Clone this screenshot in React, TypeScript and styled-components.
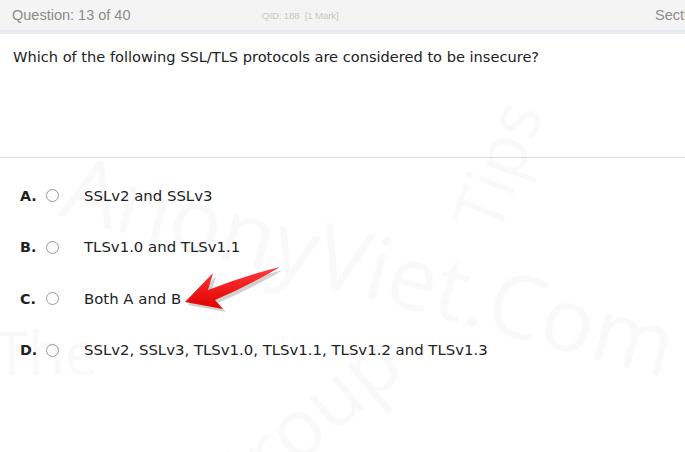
import React from "react";
import styled, { createGlobalStyle } from "styled-components";

const Global = createGlobalStyle`
  html, body { margin: 0; padding: 0; background: #ffffff; overflow: hidden; }
  body { width: 685px; height: 452px; }
`;

const Page = styled.div`
  position: relative;
  width: 685px;
  height: 452px;
  overflow: hidden;
  background: #ffffff;
`;

const Header = styled.header`
  display: flex;
  align-items: center;
  height: 30px;
  background: #f4f4f4;
  border-bottom: 4px solid #e6e9ef;
  font-family: "Liberation Sans", Arial, sans-serif;
  white-space: nowrap;
`;

const HeaderLeft = styled.div`
  flex: 0 0 262px;
  box-sizing: border-box;
  padding-left: 12px;
  font-size: 14.5px;
  color: #8c8c8c;
`;

const HeaderMid = styled.div`
  font-size: 9.8px;
  color: #c8c8c8;
  letter-spacing: -0.2px;
`;

const Spacer = styled.div`
  flex: 1;
`;

const HeaderRight = styled.div`
  flex: 0 0 30px;
  overflow: hidden;
  font-size: 14.5px;
  color: #8c8c8c;
`;

const QuestionBlock = styled.div`
  height: 124px;
  box-sizing: border-box;
  padding: 14px 13px 0;
  border-bottom: 1px solid #dcdcdc;
  font-family: "DejaVu Sans", Verdana, sans-serif;
  font-size: 14.6px;
  color: #222;
`;

const Options = styled.div`
  display: flex;
  flex-direction: column;
  padding-top: 12px;
  font-family: "DejaVu Sans", Verdana, sans-serif;
  font-size: 14.9px;
  color: #222;
`;

const Row = styled.div`
  display: flex;
  align-items: center;
  height: 51.5px;
  padding-left: 20px;
`;

const Label = styled.span`
  width: 26px;
  font-weight: bold;
  font-size: 14.3px;
`;

const Radio = styled.span`
  width: 11px;
  height: 11px;
  border: 1px solid #9a9a9a;
  border-radius: 50%;
  background: #fdfdfd;
  margin-right: 25px;
`;

const Text = styled.span``;

const Watermark = styled.div<{ $x: number; $y: number; $r: number; $s: number }>`
  position: absolute;
  left: ${(p) => p.$x}px;
  top: ${(p) => p.$y}px;
  transform: rotate(${(p) => p.$r}deg);
  transform-origin: left top;
  font-family: "Open Sans", "DejaVu Sans", sans-serif;
  font-size: ${(p) => p.$s}px;
  color: rgba(0, 0, 0, 0.025);
  white-space: nowrap;
  pointer-events: none;
  line-height: 1;
`;

const ArrowSvg = styled.svg`
  position: absolute;
  left: 0;
  top: 0;
  pointer-events: none;
`;

const options = [
  { l: "A.", t: "SSLv2 and SSLv3" },
  { l: "B.", t: "TLSv1.0 and TLSv1.1" },
  { l: "C.", t: "Both A and B" },
  { l: "D.", t: "SSLv2, SSLv3, TLSv1.0, TLSv1.1, TLSv1.2 and TLSv1.3" },
];

export default function App() {
  return (
    <Page>
      <Global />
      <Header>
        <HeaderLeft>Question: 13 of 40</HeaderLeft>
        <HeaderMid>QID: 188&nbsp;&nbsp;[1 Mark]</HeaderMid>
        <Spacer />
        <HeaderRight>Section: 1</HeaderRight>
      </Header>
      <QuestionBlock>
        Which of the following SSL/TLS protocols are considered to be insecure?
      </QuestionBlock>
      <Options>
        {options.map((o) => (
          <Row key={o.l}>
            <Label>{o.l}</Label>
            <Radio />
            <Text>{o.t}</Text>
          </Row>
        ))}
      </Options>
      <Watermark $x={78} $y={140} $r={15} $s={88}>AnonyViet.Com</Watermark>
      <Watermark $x={440} $y={215} $r={-70} $s={70}>Tips</Watermark>
      <Watermark $x={180} $y={470} $r={-40} $s={80}>Group</Watermark>
      <Watermark $x={-5} $y={322} $r={0} $s={60}>The</Watermark>
      <ArrowSvg width="685" height="452" viewBox="0 0 685 452">
        <defs>
          <linearGradient id="ag" x1="0" y1="0" x2="0" y2="1">
            <stop offset="0" stopColor="#ff3b3b" />
            <stop offset="1" stopColor="#e00000" />
          </linearGradient>
        </defs>
        <path
          d="M188,305 L216,276 L211,293 Q246,279 283,270 Q253,288 218,303 L226,312 Z"
          fill="#000"
          opacity="0.18"
        />
        <path
          d="M185,302 L213,273 L208,290 Q243,276 280,267 Q250,285 215,300 L223,309 Z"
          fill="url(#ag)"
        />
      </ArrowSvg>
    </Page>
  );
}
